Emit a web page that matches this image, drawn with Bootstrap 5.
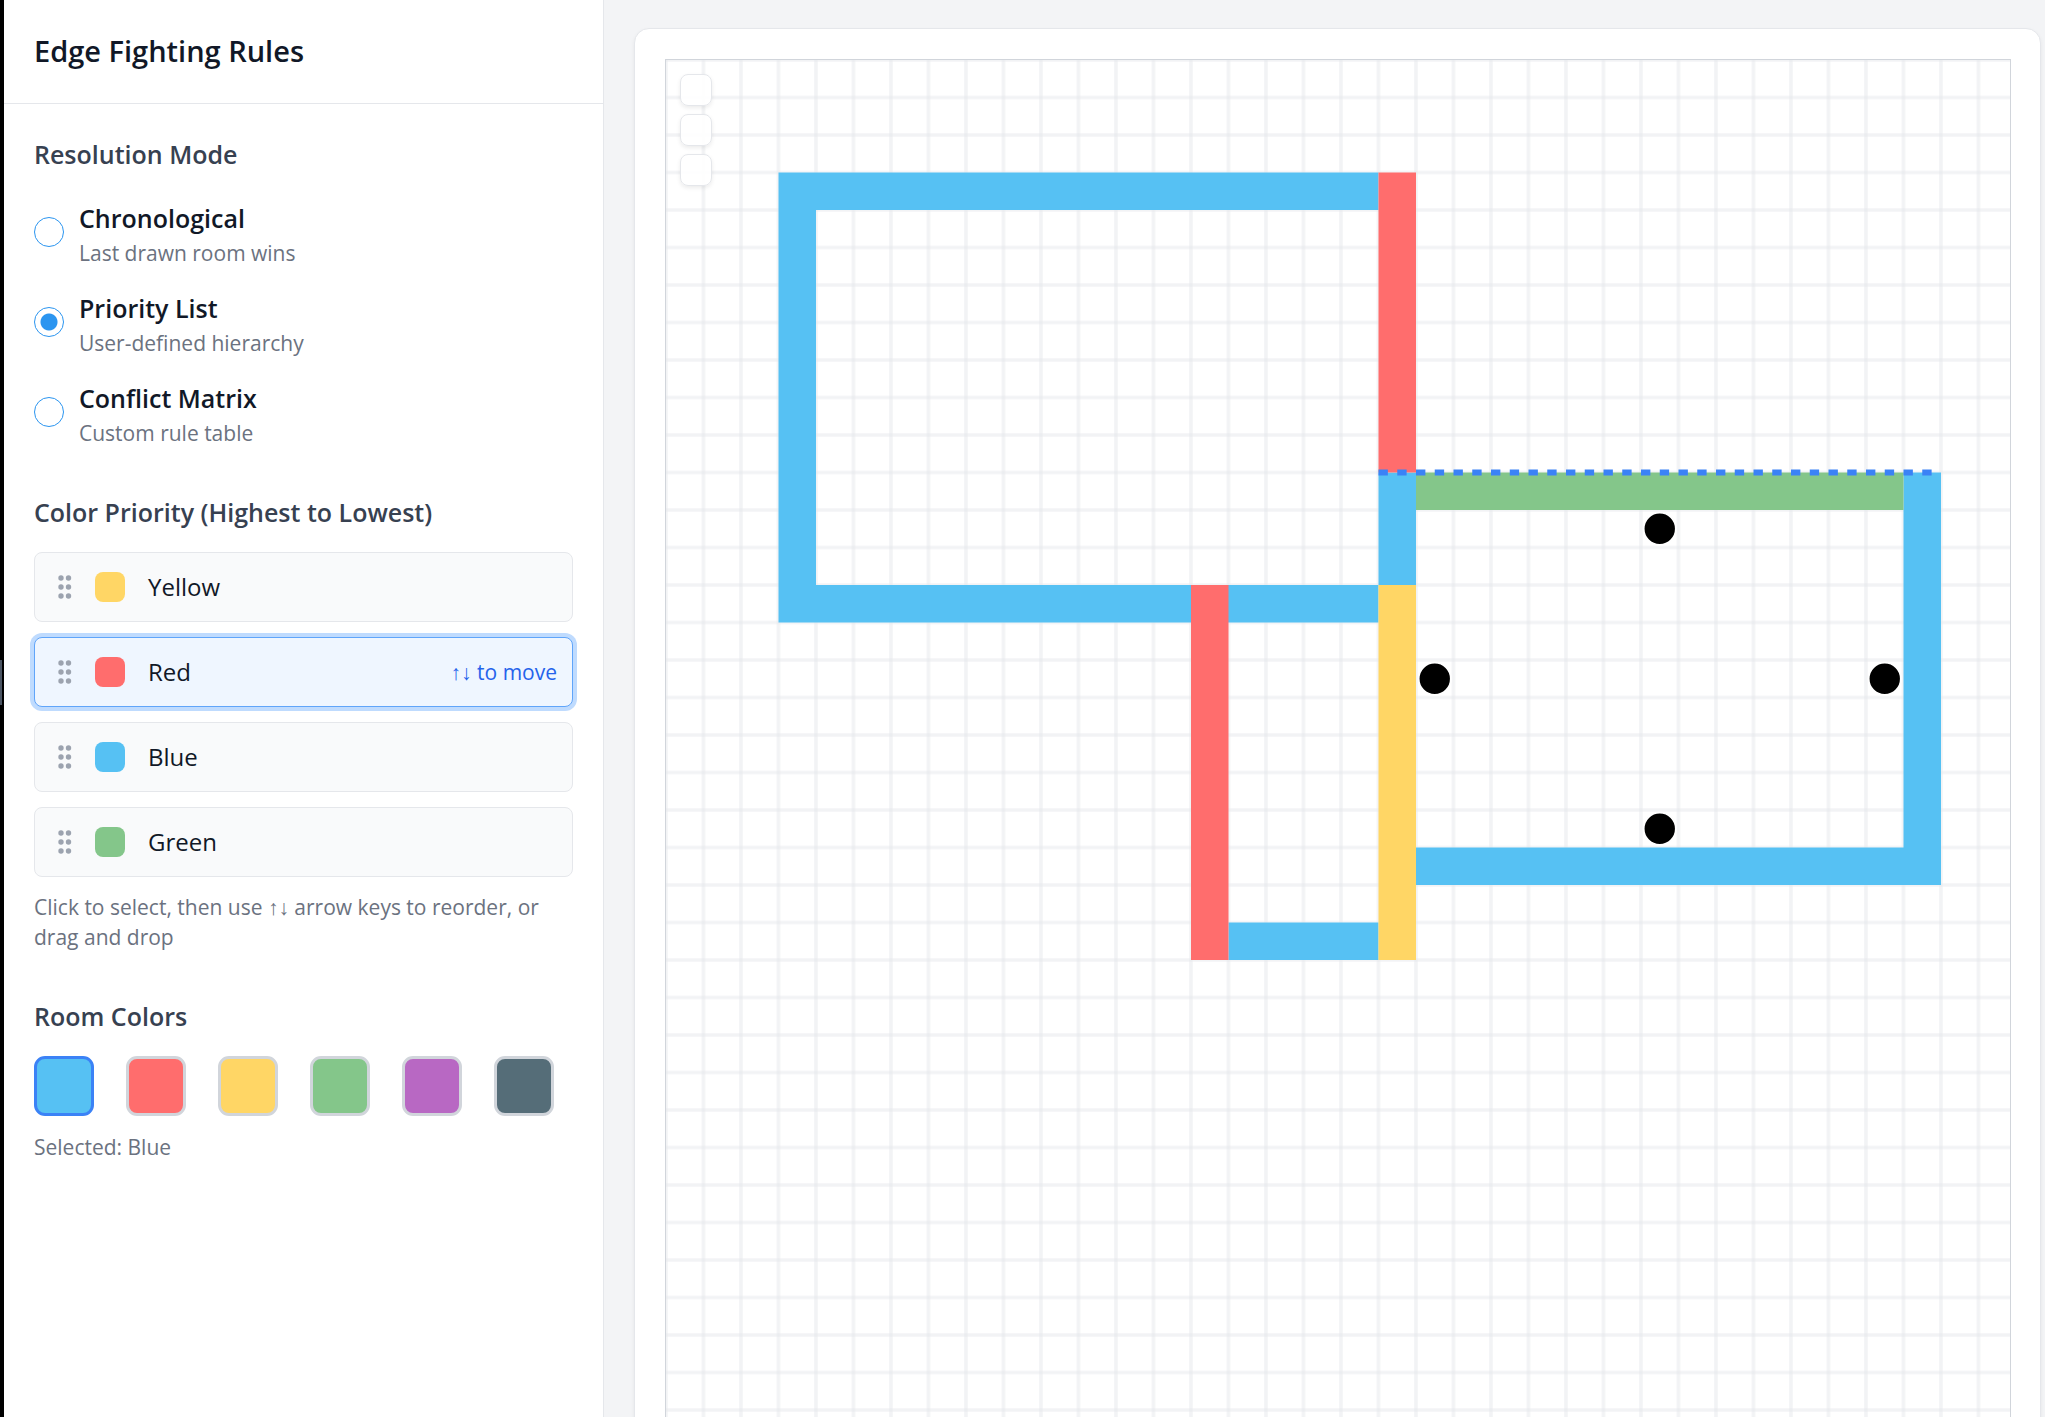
<!DOCTYPE html>
<html lang="en">
<head>
<meta charset="utf-8">
<meta name="viewport" content="width=device-width, initial-scale=1">
<title>Edge Fighting Rules</title>
<link href="https://cdn.jsdelivr.net/npm/bootstrap@5.3.0/dist/css/bootstrap.min.css" rel="stylesheet">
<style>
  body { font-family: "Open Sans", "Noto Sans", sans-serif; background: #f3f4f6; color: #111827; font-size: 24px; line-height: 34px; }
  .window-edge { width: 4px; background: #000; }
  .window-grip { width: 2px; height: 45px; margin-top: 660px; background: #4b5563; }
  .rules-panel { width: 600px; border-right: 1px solid #e5e7eb; }
  .panel-head { padding: 33px 30px 34px; border-bottom: 1px solid #e5e7eb; }
  .panel-head h1 { font-size: 29px; line-height: 36px; font-weight: 600; }
  .panel-body { padding: 30px; gap: 44px; }
  .section-title { font-size: 25px; line-height: 40px; font-weight: 600; color: #374151; }
  .mode-list { gap: 8px; margin-top: 12px; }
  .mode-row { gap: 15px; padding-top: 12px; }
  .mode-row input { appearance: none; width: 30px; height: 30px; border: 1px solid #2b95f0; border-radius: 50%; background: #fff; margin: 0 0 2px; }
  .mode-row input:checked { background: radial-gradient(circle, #2b95f0 8px, #fff 9px); }
  .mode-name { font-size: 25px; font-weight: 600; line-height: 40px; }
  .hint { font-size: 21px; line-height: 30px; color: #6b7280; }
  .move-hint { color: #2563eb; }
  .priority-list { gap: 15px; margin: 20px 0 15px; }
  .priority-item { height: 70px; padding: 0 15px 0 23px; background: #f9fafb; border: 1px solid #e5e7eb; border-radius: 8px; color: #111827; }
  .priority-item.selected { background: #eff6ff; border-color: #60a5fa; box-shadow: 0 0 0 4px #bfdbfe; }
  .chip { width: 30px; height: 30px; border-radius: 8px; margin: 0 23px; }
  .swatches { gap: 32px; margin-top: 20px; }
  .swatch { width: 60px; height: 60px; border: 3px solid #d1d5db; border-radius: 11px; padding: 0; }
  .swatch.selected { border-color: #3b82f6; }
  .c-blue { background: #56c1f3; } .c-red { background: #ff6d6d; } .c-yellow { background: #ffd665; }
  .c-green { background: #84c68a; } .c-purple { background: #b868c3; } .c-slate { background: #556d78; }
  .stage { padding: 28px 4px 0 30px; }
  .stage-card { border: 1px solid #e5e7eb; border-radius: 15px; padding: 30px 29px 30px 30px; box-shadow: 0 2px 4px rgba(0,0,0,.06); height: 1500px; }
  .board { border: 1px solid #d1d5db; }
  .board-tools { top: 14px; left: 14px; gap: 8px; }
  .board-tools button { width: 32px; height: 32px; border: 1px solid #e5e7eb; border-radius: 8px; background: rgba(255,255,255,.9); box-shadow: 0 2px 4px rgba(0,0,0,.08); padding: 0; }
</style>
</head>
<body>
<div class="d-flex vh-100 overflow-hidden">
  <div class="window-edge flex-shrink-0"><div class="window-grip"></div></div>
  <aside class="rules-panel bg-white flex-shrink-0">
    <header class="panel-head"><h1 class="m-0">Edge Fighting Rules</h1></header>
    <div class="panel-body d-flex flex-column">
      <section>
        <h2 class="section-title m-0">Resolution Mode</h2>
        <div class="mode-list d-flex flex-column">
          <label class="mode-row d-flex align-items-center"><input type="radio" name="mode"><span><span class="mode-name d-block">Chronological</span><span class="hint d-block">Last drawn room wins</span></span></label>
          <label class="mode-row d-flex align-items-center"><input type="radio" name="mode" checked><span><span class="mode-name d-block">Priority List</span><span class="hint d-block">User-defined hierarchy</span></span></label>
          <label class="mode-row d-flex align-items-center"><input type="radio" name="mode"><span><span class="mode-name d-block">Conflict Matrix</span><span class="hint d-block">Custom rule table</span></span></label>
        </div>
      </section>
      <section>
        <h2 class="section-title m-0">Color Priority (Highest to Lowest)</h2>
        <svg class="d-none"><symbol id="grip" viewBox="0 0 14 24"><g fill="#9ca3af"><circle cx="3" cy="3" r="2.7"/><circle cx="10.5" cy="3" r="2.7"/><circle cx="3" cy="12" r="2.7"/><circle cx="10.5" cy="12" r="2.7"/><circle cx="3" cy="21" r="2.7"/><circle cx="10.5" cy="21" r="2.7"/></g></symbol></svg>
        <div class="priority-list d-flex flex-column">
          <button class="priority-item d-flex align-items-center"><svg width="14" height="24"><use href="#grip"/></svg><span class="chip c-yellow"></span>Yellow</button>
          <button class="priority-item selected d-flex align-items-center"><svg width="14" height="24"><use href="#grip"/></svg><span class="chip c-red"></span>Red<span class="hint move-hint ms-auto">↑↓ to move</span></button>
          <button class="priority-item d-flex align-items-center"><svg width="14" height="24"><use href="#grip"/></svg><span class="chip c-blue"></span>Blue</button>
          <button class="priority-item d-flex align-items-center"><svg width="14" height="24"><use href="#grip"/></svg><span class="chip c-green"></span>Green</button>
        </div>
        <p class="hint mb-0">Click to select, then use ↑↓ arrow keys to reorder, or drag and drop</p>
      </section>
      <section>
        <h2 class="section-title m-0">Room Colors</h2>
        <div class="swatches d-flex">
          <button class="swatch selected c-blue" aria-label="Blue"></button>
          <button class="swatch c-red" aria-label="Red"></button>
          <button class="swatch c-yellow" aria-label="Yellow"></button>
          <button class="swatch c-green" aria-label="Green"></button>
          <button class="swatch c-purple" aria-label="Purple"></button>
          <button class="swatch c-slate" aria-label="Slate"></button>
        </div>
        <p class="hint mt-3 mb-0">Selected: Blue</p>
      </section>
    </div>
  </aside>
  <main class="stage flex-grow-1">
    <div class="stage-card bg-white">
      <div class="board position-relative h-100">
        <svg class="d-block" width="100%" height="100%">
          <defs><pattern id="grid" width="20" height="20" patternUnits="userSpaceOnUse" patternTransform="scale(1.875)"><g stroke="#e5e7eb" stroke-opacity=".5" stroke-width="1.9" fill="none"><path d="M0 0H20M0 20H20"/><path d="M0 0V20M20 0V20"/></g></pattern></defs>
          <rect width="100%" height="100%" fill="url(#grid)"/>
          <g transform="scale(37.5)">
            <path fill="#56c1f3" d="M3 3H19V4H4V14H19V15H3ZM19 11H20V14H19ZM33 11H34V22H20V21H33ZM15 23H19V24H15Z"/>
            <path fill="#ff6d6d" d="M19 3H20V11H19ZM14 14H15V24H14Z"/>
            <path fill="#ffd665" d="M19 14H20V24H19Z"/>
            <path fill="#84c68a" d="M20 11H33V12H20Z"/>
            <path d="M19 11H34" stroke="#3b82f6" stroke-width=".16" stroke-dasharray=".25 .25"/>
            <g stroke="#fff" stroke-width=".05"><circle cx="26.5" cy="12.5" r=".43"/><circle cx="20.5" cy="16.5" r=".43"/><circle cx="32.5" cy="16.5" r=".43"/><circle cx="26.5" cy="20.5" r=".43"/></g>
          </g>
        </svg>
        <div class="board-tools position-absolute d-flex flex-column">
          <button aria-label="Zoom in"></button><button aria-label="Zoom out"></button><button aria-label="Reset view"></button>
        </div>
      </div>
    </div>
  </main>
</div>
<script src="https://cdn.jsdelivr.net/npm/bootstrap@5.3.0/dist/js/bootstrap.bundle.min.js"></script>
</body>
</html>
